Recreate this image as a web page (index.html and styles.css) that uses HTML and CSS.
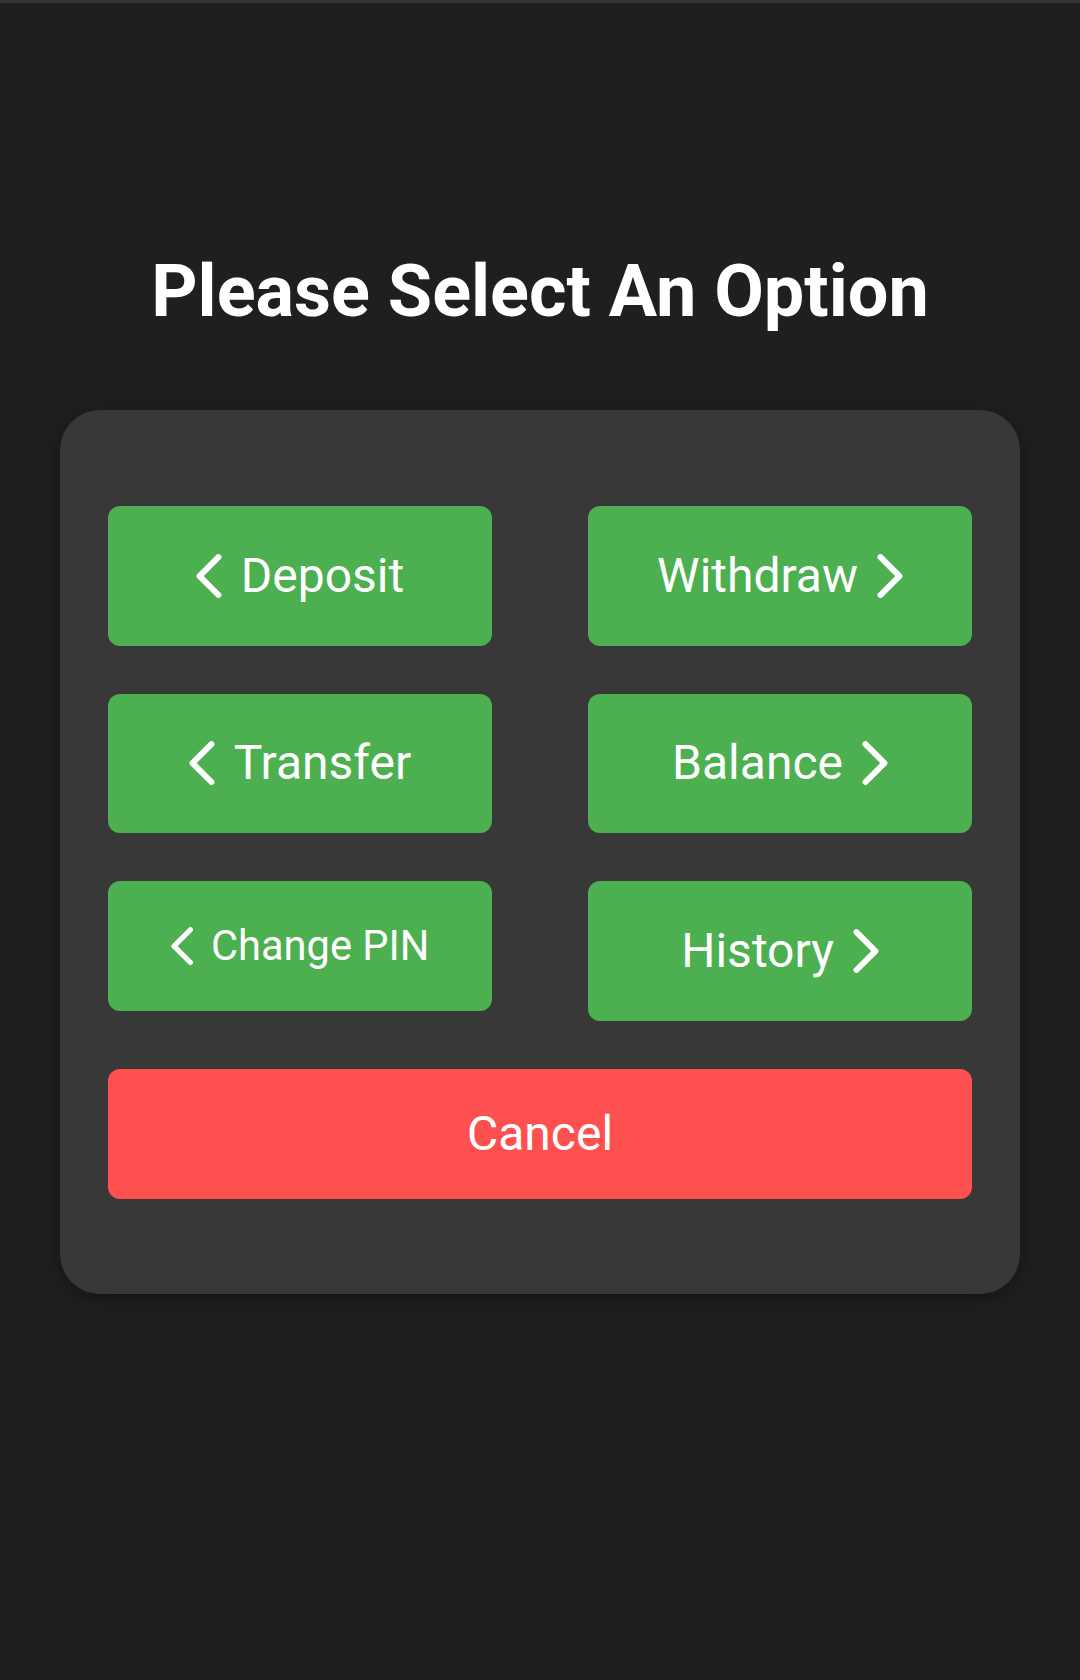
FILE: index.html
```html
<!DOCTYPE html>
<html lang="en">
<head>
<meta charset="utf-8">
<title>Please Select An Option</title>
<link rel="stylesheet" href="styles.css">
</head>
<body>
<div class="topbar"></div>
<main class="screen">
  <h1 class="title">Please Select An Option</h1>
  <section class="card">
    <div class="grid">
      <button class="opt"><svg class="chev" viewBox="0 0 26 44"><polyline points="22.5,3 3.5,22 22.5,41"/></svg><span>Deposit</span></button>
      <button class="opt"><span>Withdraw</span><svg class="chev" viewBox="0 0 26 44"><polyline points="3.5,3 22.5,22 3.5,41"/></svg></button>
      <button class="opt"><svg class="chev" viewBox="0 0 26 44"><polyline points="22.5,3 3.5,22 22.5,41"/></svg><span>Transfer</span></button>
      <button class="opt"><span>Balance</span><svg class="chev" viewBox="0 0 26 44"><polyline points="3.5,3 22.5,22 3.5,41"/></svg></button>
      <button class="opt opt-small"><svg class="chev" viewBox="0 0 26 44"><polyline points="22.5,3 3.5,22 22.5,41"/></svg><span>Change PIN</span></button>
      <button class="opt"><span>History</span><svg class="chev" viewBox="0 0 26 44"><polyline points="3.5,3 22.5,22 3.5,41"/></svg></button>
    </div>
    <button class="cancel">Cancel</button>
  </section>
</main>
</body>
</html>
```

FILE: styles.css
```css
html, body {
  margin: 0;
  padding: 0;
}

body {
  background: #1f1f1f;
  font-family: Roboto, "Liberation Sans", sans-serif;
  color: #ffffff;
  min-height: 1680px;
}

.topbar {
  height: 3px;
  background: #363636;
}

.screen {
  padding: 247px 60px 0;
  display: flex;
  flex-direction: column;
  align-items: stretch;
}

.title {
  margin: 0;
  text-align: center;
  font-size: 72px;
  line-height: 84px;
  font-weight: 700;
  color: #ffffff;
}

.card {
  margin-top: 76px;
  background: #383838;
  border-radius: 40px;
  padding: 96px 48px 95px;
  box-shadow: 0 4px 18px rgba(0, 0, 0, 0.35);
  display: flex;
  flex-direction: column;
  gap: 48px;
}

.grid {
  display: grid;
  grid-template-columns: 1fr 1fr;
  column-gap: 96px;
  row-gap: 48px;
  align-items: start;
}

.opt, .cancel {
  border: none;
  margin: 0;
  color: #ffffff;
  font-family: Roboto, "Liberation Sans", sans-serif;
  font-weight: 400;
  border-radius: 12px;
  display: flex;
  align-items: center;
  justify-content: center;
}

.opt {
  background: #4caf50;
  font-size: 48px;
  line-height: 56px;
  padding: 41.75px 0;
  gap: 19px;
}

.opt-small {
  font-size: 41.6px;
  line-height: 46.5px;
  gap: 18px;
}

.chev {
  width: 0.54em;
  height: 0.92em;
  flex: none;
  fill: none;
  stroke: #ffffff;
  stroke-width: 6;
  stroke-linecap: round;
  stroke-linejoin: round;
}

.cancel {
  background: #ff5050;
  font-size: 48px;
  line-height: 56px;
  padding: 37px 0;
}
```
